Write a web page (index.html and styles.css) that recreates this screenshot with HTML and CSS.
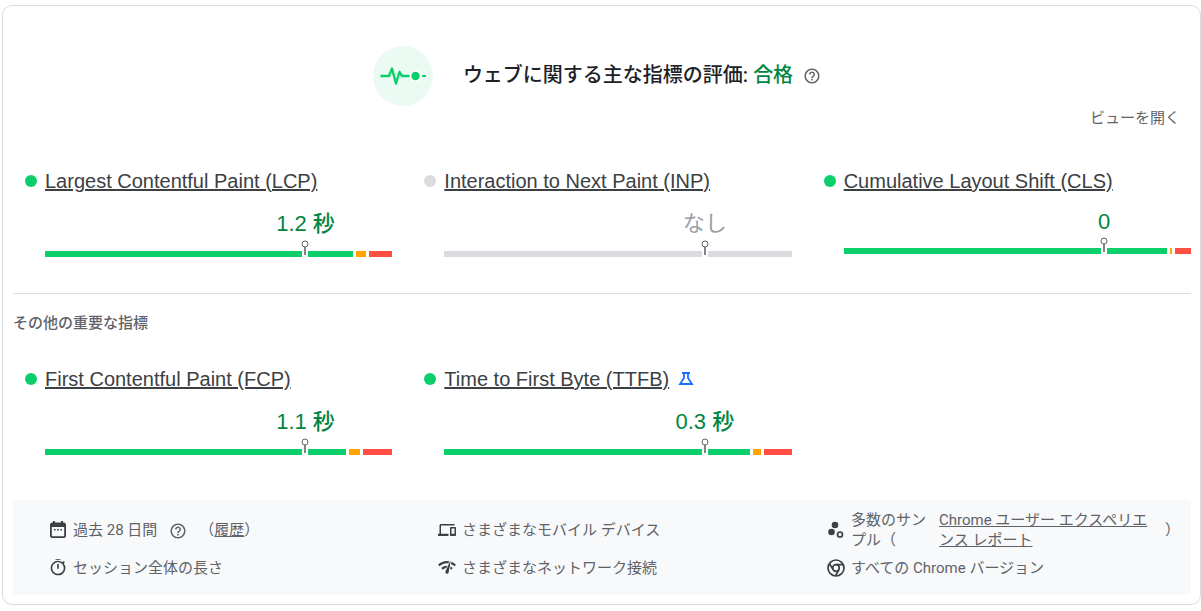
FILE: index.html
```html
<!DOCTYPE html>
<html lang="ja">
<head>
<meta charset="utf-8">
<meta name="viewport" content="width=device-width, initial-scale=1">
<title>ウェブに関する主な指標の評価</title>
<link rel="stylesheet" href="styles.css">
</head>
<body>
<svg class="defs" aria-hidden="true">
  <symbol id="help" viewBox="0 0 24 24"><path d="M11 18h2v-2h-2v2zm1-16C6.48 2 2 6.48 2 12s4.48 10 10 10 10-4.48 10-10S17.520 2 12 2zm0 18c-4.410 0-8-3.590-8-8s3.590-8 8-8 8 3.590 8 8-3.590 8-8 8zm0-14c-2.210 0-4 1.790-4 4h2c0-1.100.9-2 2-2s2 .9 2 2c0 2-3 1.750-3 5h2c0-2.250 3-2.500 3-5 0-2.210-1.790-4-4-4z"/></symbol>
  <symbol id="pin" viewBox="0 0 6 17"><path fill="#fff" d="M0 10h6v7H0z"/><path fill="#80868b" d="M2 7h2v8H2z"/></symbol>
</svg>
<main class="card">
  <header class="summary">
    <svg class="summary-icon" viewBox="0 0 60 60" aria-hidden="true">
      <circle cx="30" cy="30" r="30" fill="#ebfbf3"/>
      <path d="M7.500 30h8.500l3-7.500 4 15 3.500-11.500 2.500 4H38" fill="none" stroke="#0cce6b" stroke-width="2.400" stroke-linejoin="round"/>
      <circle cx="42.500" cy="30" r="6" fill="#fff"/>
      <circle cx="42.500" cy="30" r="4.200" fill="#0cce6b"/>
      <path d="M49 30h4" stroke="#0cce6b" stroke-width="2"/>
    </svg>
    <h1 class="summary-title">ウェブに関する主な指標の評価: <span class="pass">合格</span></h1>
    <button class="help" type="button" aria-label="ヘルプ"><svg viewBox="0 0 24 24"><use href="#help"/></svg></button>
  </header>
  <div class="toolbar"><button class="view-button" type="button">ビューを開く</button></div>

  <section class="metrics">
    <article class="metric">
      <span class="dot"></span>
      <h2 class="metric-name"><a href="#lcp">Largest Contentful Paint (LCP)</a></h2>
      <div class="gauge">
        <p class="value">1.2 秒</p>
        <div class="track">
          <span class="bar good" style="flex-grow:309"></span><span class="bar fair" style="flex-grow:10"></span><span class="bar poor" style="flex-grow:23"></span>
          <svg class="pin"><use href="#pin"/><circle cx="3" cy="4" r="3"/></svg>
        </div>
      </div>
    </article>
    <article class="metric">
      <span class="dot dot-none"></span>
      <h2 class="metric-name"><a href="#inp">Interaction to Next Paint (INP)</a></h2>
      <div class="gauge">
        <p class="value value-none">なし</p>
        <div class="track">
          <span class="bar none"></span>
          <svg class="pin"><use href="#pin"/><circle cx="3" cy="4" r="3"/></svg>
        </div>
      </div>
    </article>
    <article class="metric">
      <span class="dot"></span>
      <h2 class="metric-name"><a href="#cls">Cumulative Layout Shift (CLS)</a></h2>
      <div class="gauge">
        <p class="value value-plain">0</p>
        <div class="track">
          <span class="bar good" style="flex-grow:325"></span><span class="bar fair" style="flex-grow:2"></span><span class="bar poor" style="flex-grow:16"></span>
          <svg class="pin"><use href="#pin"/><circle cx="3" cy="4" r="3"/></svg>
        </div>
      </div>
    </article>
  </section>

  <h2 class="section-title">その他の重要な指標</h2>
  <section class="metrics">
    <article class="metric">
      <span class="dot"></span>
      <h3 class="metric-name"><a href="#fcp">First Contentful Paint (FCP)</a></h3>
      <div class="gauge">
        <p class="value">1.1 秒</p>
        <div class="track">
          <span class="bar good" style="flex-grow:302"></span><span class="bar fair" style="flex-grow:11"></span><span class="bar poor" style="flex-grow:29"></span>
          <svg class="pin"><use href="#pin"/><circle cx="3" cy="4" r="3"/></svg>
        </div>
      </div>
    </article>
    <article class="metric">
      <span class="dot"></span>
      <h3 class="metric-name"><a href="#ttfb">Time to First Byte (TTFB)</a>
        <svg class="flask" viewBox="0 0 16 16" aria-label="試験運用版"><path d="M4 2h8M6 2v5L2 13h12l-4-6V2" fill="none" stroke="#1a6dff" stroke-width="1.800"/></svg></h3>
      <div class="gauge">
        <p class="value">0.3 秒</p>
        <div class="track">
          <span class="bar good" style="flex-grow:305"></span><span class="bar fair" style="flex-grow:8"></span><span class="bar poor" style="flex-grow:28"></span>
          <svg class="pin"><use href="#pin"/><circle cx="3" cy="4" r="3"/></svg>
        </div>
      </div>
    </article>
  </section>

  <footer class="details">
    <div class="detail">
      <svg class="icon" viewBox="0 0 18 18"><path fill-rule="evenodd" d="M4 0h2v1.500h6V0h2v1.500h1.500L17 3v12.500L15.500 17h-13L1 15.500V3l1.500-1.500H4zM2.800 6v9.200h12.400V6zM5 8h1.600v1.500H5zm3.200 0h1.600v1.500H8.200zm3.200 0H13v1.500h-1.600z"/></svg>
      <span>過去 28 日間</span>
      <button class="help help-inline" type="button" aria-label="期間のヘルプ"><svg viewBox="0 0 24 24"><use href="#help"/></svg></button>
      <span>（<a href="#history">履歴</a>）</span>
    </div>
    <div class="detail">
      <svg class="icon" viewBox="0 2 24 20"><path d="M4 6h18V4H4c-1.100 0-2 .9-2 2v11H0v3h14v-3H4V6zm19 2h-6c-.55 0-1 .45-1 1v10c0 .55.45 1 1 1h6c.55 0 1-.45 1-1V9c0-.55-.45-1-1-1zm-1 9h-4v-7h4v7z"/></svg>
      <span>さまざまなモバイル デバイス</span>
    </div>
    <div class="detail">
      <svg class="icon" viewBox="0 0 18 18"><circle cx="8" cy="4" r="3.300"/><circle cx="4.500" cy="11" r="3.300"/><circle cx="13" cy="13.500" r="2.500" fill="none" stroke="#3c4043" stroke-width="1.700"/></svg>
      <span class="sample">多数のサンプル（</span>
      <a class="report" href="#crux">Chrome ユーザー エクスペリエンス レポート</a>
      <span>）</span>
    </div>
    <div class="detail">
      <svg class="icon" viewBox="2 2 20 22"><path d="M15 1H9v2h6V1zm-4 13h2V8h-2v6zm8.030-6.610 1.420-1.420c-.43-.51-.9-.99-1.410-1.410l-1.420 1.420A8.962 8.962 0 0 0 12 4c-4.970 0-9 4.030-9 9s4.020 9 9 9a8.994 8.994 0 0 0 7.030-14.610zM12 20c-3.870 0-7-3.130-7-7s3.130-7 7-7 7 3.130 7 7-3.130 7-7 7z"/></svg>
      <span>セッション全体の長さ</span>
    </div>
    <div class="detail">
      <svg class="icon" viewBox="1 3 22 20"><path d="M15.900 5c-.17 0-.32.090-.41.230l-.070.150-5.180 11.650c-.16.290-.26.610-.26.960 0 1.110.9 2.010 2.010 2.010.96 0 1.770-.68 1.960-1.590l.010-.030L16.400 5.500c0-.280-.22-.5-.5-.5zM1 9l2 2c2.880-2.880 6.790-4.080 10.530-3.620l1.190-2.680C9.890 3.840 4.740 5.270 1 9zm20 2 2-2c-1.640-1.640-3.550-2.820-5.590-3.570l-.53 2.820c1.500.620 2.900 1.530 4.120 2.750zm-4 4 2-2c-.8-.8-1.700-1.420-2.660-1.890l-.55 2.920c.42.270.83.590 1.210.970zM5 13l2 2c1.130-1.130 2.560-1.790 4.030-2l1.280-2.880c-2.630-.080-5.300.870-7.310 2.880z"/></svg>
      <span>さまざまなネットワーク接続</span>
    </div>
    <div class="detail">
      <svg class="icon" viewBox="0 0 18 18"><g fill="none" stroke="#3c4043" stroke-width="1.700"><circle cx="9" cy="9" r="8"/><circle cx="9" cy="9" r="3.300"/><path d="M9 5.700h7.300M6.100 10.600 2.400 4.500M11.900 10.600 8.500 16.800"/></g></svg>
      <span>すべての Chrome バージョン</span>
    </div>
  </footer>
</main>
</body>
</html>
```

FILE: styles.css
```css
* { box-sizing: border-box; }

body {
  margin: 0;
  padding: 5px 0 5px 2px;
  background: #fff;
  color: #5f6368;
  font: 15px/20px Roboto, "Noto Sans CJK JP", sans-serif;
}

h1, h2, h3, p { margin: 0; font-weight: 400; }
a { color: inherit; }
button {
  padding: 0;
  border: 0;
  background: none;
  color: inherit;
  font: inherit;
  cursor: pointer;
}
.defs { position: absolute; width: 0; height: 0; }

.card {
  padding: 40px 9px 9px 10px;
  border: 1px solid #dadce0;
  border-radius: 10px;
}

.summary { display: flex; align-items: center; justify-content: center; }
.summary-icon { width: 60px; height: 60px; margin-right: 30px; }
.summary-title {
  padding-bottom: 2px;
  color: #202124;
  font-size: 20px;
  font-weight: 500;
  line-height: 28px;
}
.pass { color: #018642; }
.help { display: flex; padding: 0 10px; }
.help svg { width: 18px; height: 18px; fill: #5f6368; }
.help-inline { padding: 2px 12px 0; }

.toolbar { display: flex; justify-content: flex-end; padding-right: 11px; }
.view-button { line-height: 24px; }

.metrics {
  display: grid;
  grid-template-columns: repeat(3, 1fr);
  gap: 32px;
  padding-left: 12px;
}
.toolbar + .metrics { margin-top: 39px; }
.metric {
  display: grid;
  grid-template-columns: 12px 1fr;
  column-gap: 8px;
  align-items: center;
  align-content: start;
}
.dot { width: 12px; height: 12px; border-radius: 50%; background: #0cce6b; }
.dot-none { background: #dadce0; }
.metric-name {
  display: flex;
  align-items: center;
  gap: 9px;
  color: #3c4043;
  font: 20px/24px "Liberation Sans", sans-serif;
}
.metric-name a { text-decoration-thickness: 2px; }
.flask { width: 16px; height: 16px; }

.gauge { grid-column: 2; margin-top: 14px; }
.value {
  padding: 2px 0 0 50%;
  color: #018642;
  font: 500 22px/30px "Liberation Sans", "Noto Sans CJK JP", sans-serif;
  text-align: center;
}
.value-none { color: #9aa0a6; font-weight: 400; }
.value-plain { padding-top: 0; line-height: 29px; }
.track { position: relative; display: flex; gap: 3px; padding-top: 12px; }
.bar { flex: 1 1 0; height: 6px; }
.good { background: #0cce6b; }
.fair { background: #ffa400; }
.poor { background: #ff4e42; }
.none { background: #dadce0; }
.pin {
  position: absolute;
  left: calc(75% - 3px);
  bottom: 0;
  width: 6px;
  height: 17px;
  overflow: visible;
}
.pin circle { fill: #fff; stroke: #5f6368; }

.section-title {
  margin: 36px 0 32px;
  padding-top: 17px;
  border-top: 1px solid #dadce0;
  font-size: 15px;
  font-weight: 500;
  line-height: 24px;
}

.details {
  display: grid;
  grid-template-columns: repeat(3, 1fr);
  gap: 8px 36px;
  margin-top: 45px;
  padding: 10px 11px 17px 36px;
  border-radius: 4px;
  background: #f8f9fb;
}
.detail { display: flex; align-items: center; }
.icon { flex: none; width: 18px; height: 18px; margin-right: 6px; fill: #3c4043; }
.sample { flex: none; width: 80px; margin-right: 8px; }
.report { flex: 1; padding-right: 5px; }
```
